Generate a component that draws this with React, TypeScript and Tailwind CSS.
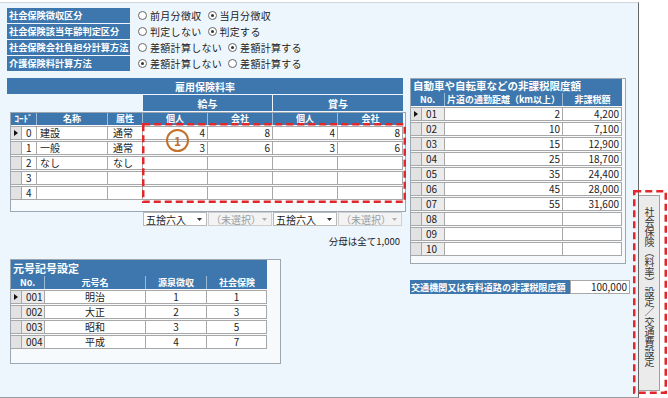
const BLUE = "bg-[#3d77ad]"

const radioRows: [string, [string, boolean][]][] = [
  ["社会保険徴収区分", [["前月分徴収", false], ["当月分徴収", true]]],
  ["社会保険該当年齢判定区分", [["判定しない", false], ["判定する", true]]],
  ["社会保険会社負担分計算方法", [["差額計算しない", false], ["差額計算する", true]]],
  ["介護保険料計算方法", [["差額計算しない", true], ["差額計算する", false]]],
]

const koyoRows = [
  ["0", "建設", "通常", "4", "8", "4", "8"],
  ["1", "一般", "通常", "3", "6", "3", "6"],
  ["2", "なし", "なし", "", "", "", ""],
  ["3", "", "", "", "", "", ""],
  ["4", "", "", "", "", "", ""],
]

const gengoRows = [
  ["001", "明治", "1", "1"],
  ["002", "大正", "2", "3"],
  ["003", "昭和", "3", "5"],
  ["004", "平成", "4", "7"],
]

const carRows = [
  ["01", "2", "4,200"],
  ["02", "10", "7,100"],
  ["03", "15", "12,900"],
  ["04", "25", "18,700"],
  ["05", "35", "24,400"],
  ["06", "45", "28,000"],
  ["07", "55", "31,600"],
  ["08", "", ""],
  ["09", "", ""],
  ["10", "", ""],
]

function Radio({ checked }: { checked: boolean }) {
  return (
    <span className="w-[9px] h-[9px] rounded-full border border-[#666] bg-white flex items-center justify-center">
      {checked && <span className="w-[3px] h-[3px] rounded-full bg-[#333]" />}
    </span>
  )
}

function Pointer({ on }: { on: boolean }) {
  return (
    <div className="w-[11px] h-full bg-[#e2e2e2] border-r border-[#a8a8a8] flex items-center justify-center">
      {on && (
        <svg width="4" height="6" viewBox="0 0 4 6">
          <path d="M0 0 L4 3 L0 6 Z" fill="#111" />
        </svg>
      )}
    </div>
  )
}

function Select({ label, disabled }: { label: string; disabled?: boolean }) {
  return (
    <div
      className={
        "w-[64px] h-full border flex items-center justify-between pl-[2px] pr-[4px] text-[10px] " +
        (disabled ? "bg-[#f3f3f3] border-[#cfcfcf] text-[#9c9c9c]" : "bg-white border-[#b8b8b8] text-[#222]")
      }
    >
      <span>{label}</span>
      <svg width="5" height="3" viewBox="0 0 5 3">
        <path d="M0 0 L5 0 L2.5 3 Z" fill={disabled ? "#b0b0b0" : "#333"} />
      </svg>
    </div>
  )
}

export default function App() {
  return (
    <div className="relative w-[668px] h-[398px] bg-white pt-[2px] flex font-['Noto_Sans_CJK_JP','Noto_Sans',sans-serif] text-[#222]">
      <div className="w-[639px] h-[396px] bg-[#eef6fd] border-t border-t-[#d2d6da] border-r border-r-[#666] border-b border-b-[#9a9a9a] pl-[7px] pt-[5px]">
        {/* radio settings */}
        <div className="flex flex-col gap-[1px]">
          {radioRows.map(([label, opts]) => (
            <div key={label} className="flex items-center h-[15px] gap-[8px]">
              <div className={`w-[123px] h-full ${BLUE} text-white font-bold text-[9.2px] leading-[15px] pl-[2px] whitespace-nowrap`}>
                {label}
              </div>
              <div className="flex items-center gap-[6px] text-[10px] tracking-[0.3px]">
                {opts.map(([t, c]) => (
                  <div key={t} className="flex items-center gap-[3px]">
                    <Radio checked={c} />
                    <span>{t}</span>
                  </div>
                ))}
              </div>
            </div>
          ))}
        </div>

        <div className="flex gap-[4px] mt-[7px]">
          {/* left column */}
          <div className="w-[399px]">
            <div className={`h-[16px] w-[396px] ${BLUE} text-white font-bold text-[10px] flex items-center justify-center`}>
              雇用保険料率
            </div>
            <div className="flex mt-[1px] h-[16px] text-white font-bold text-[10px]">
              <div className="w-[136px]" />
              <div className={`w-[129px] ${BLUE} flex items-center justify-center`}>給与</div>
              <div className="w-[1px]" />
              <div className={`w-[130px] ${BLUE} flex items-center justify-center`}>賞与</div>
            </div>
            <div className="relative mt-[1px] ml-[3px] w-[396px] h-[100px] border border-[#9da7b2] bg-[#f6fafd]">
              <div className={`flex h-[12px] ${BLUE} text-white font-bold text-[9px] leading-[12px] w-[392px] divide-x divide-[#9dbad6]`}>
                <div className="w-[26px] text-center">ｺｰﾄﾞ</div>
                <div className="w-[71px] text-center">名称</div>
                <div className="w-[35px] text-center">属性</div>
                <div className="w-[65px] text-center">個人</div>
                <div className="w-[65px] text-center">会社</div>
                <div className="w-[65px] text-center">個人</div>
                <div className="w-[65px] text-center">会社</div>
              </div>
              <div className="flex flex-col gap-[1px] pt-[1px] w-[392px]">
                {koyoRows.map((r, i) => (
                  <div key={r[0]} className="flex h-[14px] border-y border-[#a8a8a8] text-[10px] leading-[12px]">
                    <Pointer on={i === 0} />
                    <div className="w-[15px] bg-white border-r border-[#a8a8a8] pl-[4px]">{r[0]}</div>
                    <div className="w-[71px] bg-white border-r border-[#a8a8a8] pl-[3px]">{r[1]}</div>
                    <div className="w-[35px] bg-white border-r border-[#a8a8a8] pl-[5px]">{r[2]}</div>
                    {r.slice(3).map((v, j) => (
                      <div key={j} className="w-[65px] bg-white border-r border-[#a8a8a8] text-right pr-[2px]">
                        {v}
                      </div>
                    ))}
                  </div>
                ))}
              </div>
              {/* annotation */}
              <svg className="absolute left-[131px] top-[10px]" width="264" height="80" viewBox="0 0 264 80">
                <rect x="1.25" y="1.25" width="261.5" height="77.5" fill="none" stroke="#e3262a" strokeWidth="2.5" strokeDasharray="7 4" />
              </svg>
              <div className="absolute left-[155px] top-[16px] w-[23px] h-[23px] rounded-full border-2 border-[#c2702c] text-[#c2702c] text-[12px] font-bold flex items-center justify-center leading-none">
                1
              </div>
            </div>
            <div className="flex ml-[136px] gap-[1px] h-[14px]">
              <Select label="五捨六入" />
              <Select label="（未選択）" disabled />
              <Select label="五捨六入" />
              <Select label="（未選択）" disabled />
            </div>
            <div className="mt-[9px] text-right pr-[6px] text-[9.5px] leading-[12px]">分母は全て1,000</div>

            <div className="mt-[12px] ml-[3px] w-[271px] h-[105px] border border-[#9da7b2] bg-[#f6fafd]">
              <div className={`w-[256px] h-[16px] ${BLUE} text-white font-bold text-[11px] leading-[16px] pl-[2px]`}>元号記号設定</div>
              <div className={`flex h-[13px] w-[256px] ${BLUE} text-white font-bold text-[9px] leading-[13px] divide-x divide-[#9dbad6]`}>
                <div className="w-[34px] text-center">No.</div>
                <div className="w-[101px] text-center">元号名</div>
                <div className="w-[61px] text-center">源泉徴収</div>
                <div className="w-[60px] text-center">社会保険</div>
              </div>
              <div className="flex flex-col gap-[1px] pt-[1px] w-[256px]">
                {gengoRows.map((r, i) => (
                  <div key={r[0]} className="flex h-[14px] border-y border-[#a8a8a8] text-[10px] leading-[12px]">
                    <Pointer on={i === 0} />
                    <div className="w-[23px] bg-[#ececec] border-r border-[#a8a8a8] pl-[4px]">{r[0]}</div>
                    <div className="w-[101px] bg-white border-r border-[#a8a8a8] text-center">{r[1]}</div>
                    <div className="w-[61px] bg-white border-r border-[#a8a8a8] text-center">{r[2]}</div>
                    <div className="w-[60px] bg-white border-r border-[#a8a8a8] text-center">{r[3]}</div>
                  </div>
                ))}
              </div>
            </div>
          </div>

          {/* right column */}
          <div className="w-[222px]">
            <div className="w-[216px] h-[186px] border border-[#9da7b2] bg-[#f6fafd]">
              <div className={`w-[211px] h-[14px] ${BLUE} text-white font-bold text-[10.5px] leading-[14px] pl-[2px] whitespace-nowrap`}>
                自動車や自転車などの非課税限度額
              </div>
              <div className={`flex h-[13px] w-[211px] ${BLUE} text-white font-bold text-[9px] leading-[13px] divide-x divide-[#9dbad6]`}>
                <div className="w-[34px] text-center">No.</div>
                <div className="w-[118px] text-center">片道の通勤距離（km以上）</div>
                <div className="w-[59px] text-center">非課税額</div>
              </div>
              <div className="flex flex-col gap-[1px] pt-[1px] w-[211px]">
                {carRows.map((r, i) => (
                  <div key={r[0]} className="flex h-[14px] border-y border-[#a8a8a8] text-[10px] leading-[12px]">
                    <Pointer on={i === 0} />
                    <div className="w-[23px] bg-[#ececec] border-r border-[#a8a8a8] pl-[4px]">{r[0]}</div>
                    <div className="w-[118px] bg-white border-r border-[#a8a8a8] text-right pr-[2px]">{r[1]}</div>
                    <div className="w-[59px] bg-white border-r border-[#a8a8a8] text-right pr-[2px]">{r[2]}</div>
                  </div>
                ))}
              </div>
            </div>
            <div className="flex mt-[16px] h-[14px]">
              <div className={`w-[160px] ${BLUE} text-white font-bold text-[9.1px] leading-[14px] pl-[1px] whitespace-nowrap overflow-hidden`}>
                交通機関又は有料道路の非課税限度額
              </div>
              <div className="w-[60px] bg-white border border-[#a8a8a8] text-[10px] leading-[12px] text-right pr-[2px]">100,000</div>
            </div>
          </div>
        </div>
      </div>

      {/* side tab */}
      <div className="mt-[193px] w-[21px] h-[196px] bg-[#ebebeb] border border-l-0 border-[#a0a0a0] flex flex-col items-center pt-[11px]">
        <div className="[writing-mode:vertical-rl] h-[170px] w-[12px] text-[10px] leading-[12px] text-[#333] whitespace-nowrap">
          社会保険（料率）設定／交通費設定
        </div>
      </div>
      <svg className="absolute left-[633px] top-[190px]" width="34" height="204" viewBox="0 0 34 204">
        <rect x="1.25" y="1.25" width="31.5" height="201.5" fill="none" stroke="#e3262a" strokeWidth="2.5" strokeDasharray="7 4" />
      </svg>
    </div>
  )
}
